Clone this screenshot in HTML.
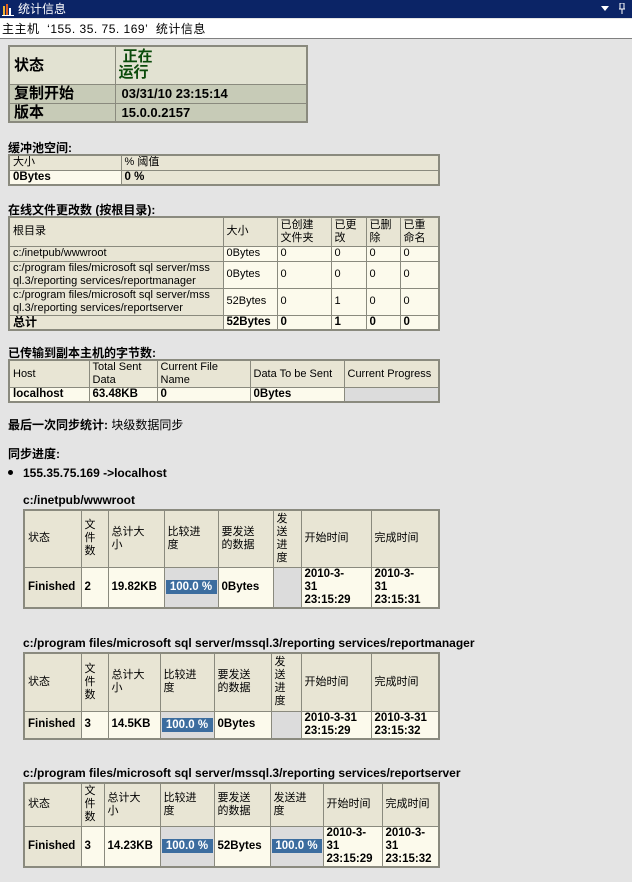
<!DOCTYPE html><html><head><meta charset="utf-8"><style>
body{margin:0;width:632px;height:882px;background:#e4e4e4;font-family:"Liberation Sans","Noto Sans CJK SC",sans-serif;font-size:11px;color:#000;position:relative;overflow:hidden}
.abs{position:absolute}
table{position:absolute;border-collapse:collapse;table-layout:fixed;border:2px solid #8a8a7e}
td{border:1px solid #8a8a7e;padding:0 0 0 3px;vertical-align:middle;line-height:13px;overflow:hidden;font-size:11px}
.h{background:#e8e5d4}
.v{background:#fcfaec}
.b{font-weight:bold;font-size:11.5px}
.lbl{font-weight:bold;font-size:12px;position:absolute;white-space:nowrap}
.pg{background:#dcdcdc;padding:0}
.bar{background:#3c6d9f;color:#fff;font-weight:bold;height:14px;line-height:14px;text-align:center;margin:0 1px;font-size:11.5px}
</style></head><body>
<div class="abs" style="left:0;top:0;width:632px;height:18px;background:#0b2466;color:#fff;font-size:12px;line-height:18px">
<svg class="abs" style="left:2px;top:2px" width="14" height="14"><rect x="1" y="4" width="2" height="10" fill="#f0b030"/><rect x="4" y="2" width="2" height="12" fill="#e06020"/><rect x="7" y="6" width="2" height="8" fill="#fff"/><rect x="0" y="13" width="12" height="1" fill="#fff"/></svg>
<span class="abs" style="left:18px;top:0">统计信息</span>
<svg class="abs" style="left:601px;top:6px" width="9" height="6"><path d="M0 0H8L4 5Z" fill="#fff"/></svg>
<svg class="abs" style="left:618px;top:3px" width="9" height="11"><path d="M2 0V6M6 0V6M1 6H7M4 6V11M2 0H6" stroke="#fff" fill="none"/></svg>
</div>
<div class="abs" style="left:0;top:19px;width:632px;height:19px;background:#fff;border-bottom:1px solid #808080;font-size:12px;line-height:20px;padding-left:2px;letter-spacing:0.5px">主主机&nbsp;&nbsp;‘155. 35. 75. 169’&nbsp;&nbsp;统计信息</div>

<table style="left:8px;top:45px;width:300px"><colgroup><col style="width:106px"><col></colgroup>
<tr style="height:38px"><td style="background:#e2e2d2;font-size:15px;font-weight:bold;padding-left:4px">状态</td><td style="background:#e2e2d2;color:#0a4a0a;font-size:15px;font-weight:bold;line-height:16px">&nbsp;正在<br>运行</td></tr>
<tr style="height:19px"><td style="background:#c7cbb7;font-size:15px;font-weight:bold;padding-left:4px">复制开始</td><td style="background:#c7cbb7;font-size:13px;font-weight:bold;padding-left:6px">03/31/10 23:15:14</td></tr>
<tr style="height:19px"><td style="background:#c7cbb7;font-size:15px;font-weight:bold;padding-left:4px">版本</td><td style="background:#c7cbb7;font-size:13px;font-weight:bold;padding-left:6px">15.0.0.2157</td></tr>
</table>

<div class="lbl" style="left:8px;top:139px">缓冲池空间:</div>
<table style="left:8px;top:154px;width:432px"><colgroup><col style="width:112px"><col></colgroup>
<tr style="height:15px"><td class="h">大小</td><td class="h">% 阈值</td></tr>
<tr style="height:15px"><td class="v b">0Bytes</td><td class="h b">0 %</td></tr>
</table>

<div class="lbl" style="left:8px;top:201px">在线文件更改数 (按根目录):</div>
<table style="left:8px;top:216px;width:432px"><colgroup><col style="width:214px"><col style="width:54px"><col style="width:54px"><col style="width:35px"><col style="width:34px"><col></colgroup>
<tr style="height:29px"><td class="h">根目录</td><td class="h">大小</td><td class="h">已创建<br>文件夹</td><td class="h">已更<br>改</td><td class="h">已删<br>除</td><td class="h">已重<br>命名</td></tr>
<tr style="height:15px"><td class="h">c:/inetpub/wwwroot</td><td class="v">0Bytes</td><td class="v">0</td><td class="v">0</td><td class="v">0</td><td class="v">0</td></tr>
<tr style="height:27px"><td class="h">c:/program files/microsoft sql server/mss<br>ql.3/reporting services/reportmanager</td><td class="v">0Bytes</td><td class="v">0</td><td class="v">0</td><td class="v">0</td><td class="v">0</td></tr>
<tr style="height:26px"><td class="h">c:/program files/microsoft sql server/mss<br>ql.3/reporting services/reportserver</td><td class="v">52Bytes</td><td class="v">0</td><td class="v">1</td><td class="v">0</td><td class="v">0</td></tr>
<tr style="height:15px"><td class="h b" style="font-size:12px">总计</td><td class="v b">52Bytes</td><td class="v b">0</td><td class="v b">1</td><td class="v b">0</td><td class="v b">0</td></tr>
</table>

<div class="lbl" style="left:8px;top:344px">已传输到副本主机的字节数:</div>
<table style="left:8px;top:359px;width:432px"><colgroup><col style="width:80px"><col style="width:68px"><col style="width:93px"><col style="width:94px"><col></colgroup>
<tr style="height:27px"><td class="h">Host</td><td class="h">Total Sent<br>Data</td><td class="h">Current File<br>Name</td><td class="h">Data To be Sent</td><td class="h">Current Progress</td></tr>
<tr style="height:14px"><td class="v b">localhost</td><td class="v b">63.48KB</td><td class="v b">0</td><td class="v b">0Bytes</td><td style="background:#dcdcdc"></td></tr>
</table>

<div class="lbl" style="left:8px;top:416px">最后一次同步统计: <span style="font-weight:normal">块级数据同步</span></div>
<div class="lbl" style="left:8px;top:445px">同步进度:</div>
<div class="abs" style="left:8px;top:470px;width:5px;height:5px;background:#000;border-radius:50%"></div>
<div class="lbl" style="left:23px;top:466px">155.35.75.169 -&gt;localhost</div>

<div class="lbl" style="left:23px;top:493px">c:/inetpub/wwwroot</div>
<table style="left:23px;top:509px;width:417px"><colgroup><col style="width:57px"><col style="width:27px"><col style="width:56px"><col style="width:54px"><col style="width:55px"><col style="width:28px"><col style="width:70px"><col></colgroup>
<tr style="height:57px"><td class="h">状态</td><td class="h">文<br>件<br>数</td><td class="h">总计大<br>小</td><td class="h">比较进<br>度</td><td class="h">要发送<br>的数据</td><td class="h">发<br>送<br>进<br>度</td><td class="h">开始时间</td><td class="h">完成时间</td></tr>
<tr style="height:40px"><td class="h b">Finished</td><td class="v b">2</td><td class="v b">19.82KB</td><td class="pg"><div class="bar">100.0 %</div></td><td class="v b">0Bytes</td><td class="pg"></td><td class="v b">2010-3-<br>31<br>23:15:29</td><td class="v b">2010-3-<br>31<br>23:15:31</td></tr>
</table>

<div class="lbl" style="left:23px;top:636px">c:/program files/microsoft sql server/mssql.3/reporting services/reportmanager</div>
<table style="left:23px;top:652px;width:417px"><colgroup><col style="width:57px"><col style="width:27px"><col style="width:52px"><col style="width:54px"><col style="width:57px"><col style="width:30px"><col style="width:70px"><col></colgroup>
<tr style="height:58px"><td class="h">状态</td><td class="h">文<br>件<br>数</td><td class="h">总计大<br>小</td><td class="h">比较进<br>度</td><td class="h">要发送<br>的数据</td><td class="h">发<br>送<br>进<br>度</td><td class="h">开始时间</td><td class="h">完成时间</td></tr>
<tr style="height:27px"><td class="h b">Finished</td><td class="v b">3</td><td class="v b">14.5KB</td><td class="pg"><div class="bar">100.0 %</div></td><td class="v b">0Bytes</td><td class="pg"></td><td class="v b">2010-3-31<br>23:15:29</td><td class="v b">2010-3-31<br>23:15:32</td></tr>
</table>

<div class="lbl" style="left:23px;top:766px">c:/program files/microsoft sql server/mssql.3/reporting services/reportserver</div>
<table style="left:23px;top:782px;width:417px"><colgroup><col style="width:57px"><col style="width:23px"><col style="width:56px"><col style="width:54px"><col style="width:56px"><col style="width:53px"><col style="width:59px"><col></colgroup>
<tr style="height:43px"><td class="h">状态</td><td class="h">文<br>件<br>数</td><td class="h">总计大<br>小</td><td class="h">比较进<br>度</td><td class="h">要发送<br>的数据</td><td class="h">发送进<br>度</td><td class="h">开始时间</td><td class="h">完成时间</td></tr>
<tr style="height:41px"><td class="h b">Finished</td><td class="v b">3</td><td class="v b">14.23KB</td><td class="pg"><div class="bar">100.0 %</div></td><td class="v b">52Bytes</td><td class="pg"><div class="bar">100.0 %</div></td><td class="v b">2010-3-<br>31<br>23:15:29</td><td class="v b">2010-3-<br>31<br>23:15:32</td></tr>
</table>
</body></html>
